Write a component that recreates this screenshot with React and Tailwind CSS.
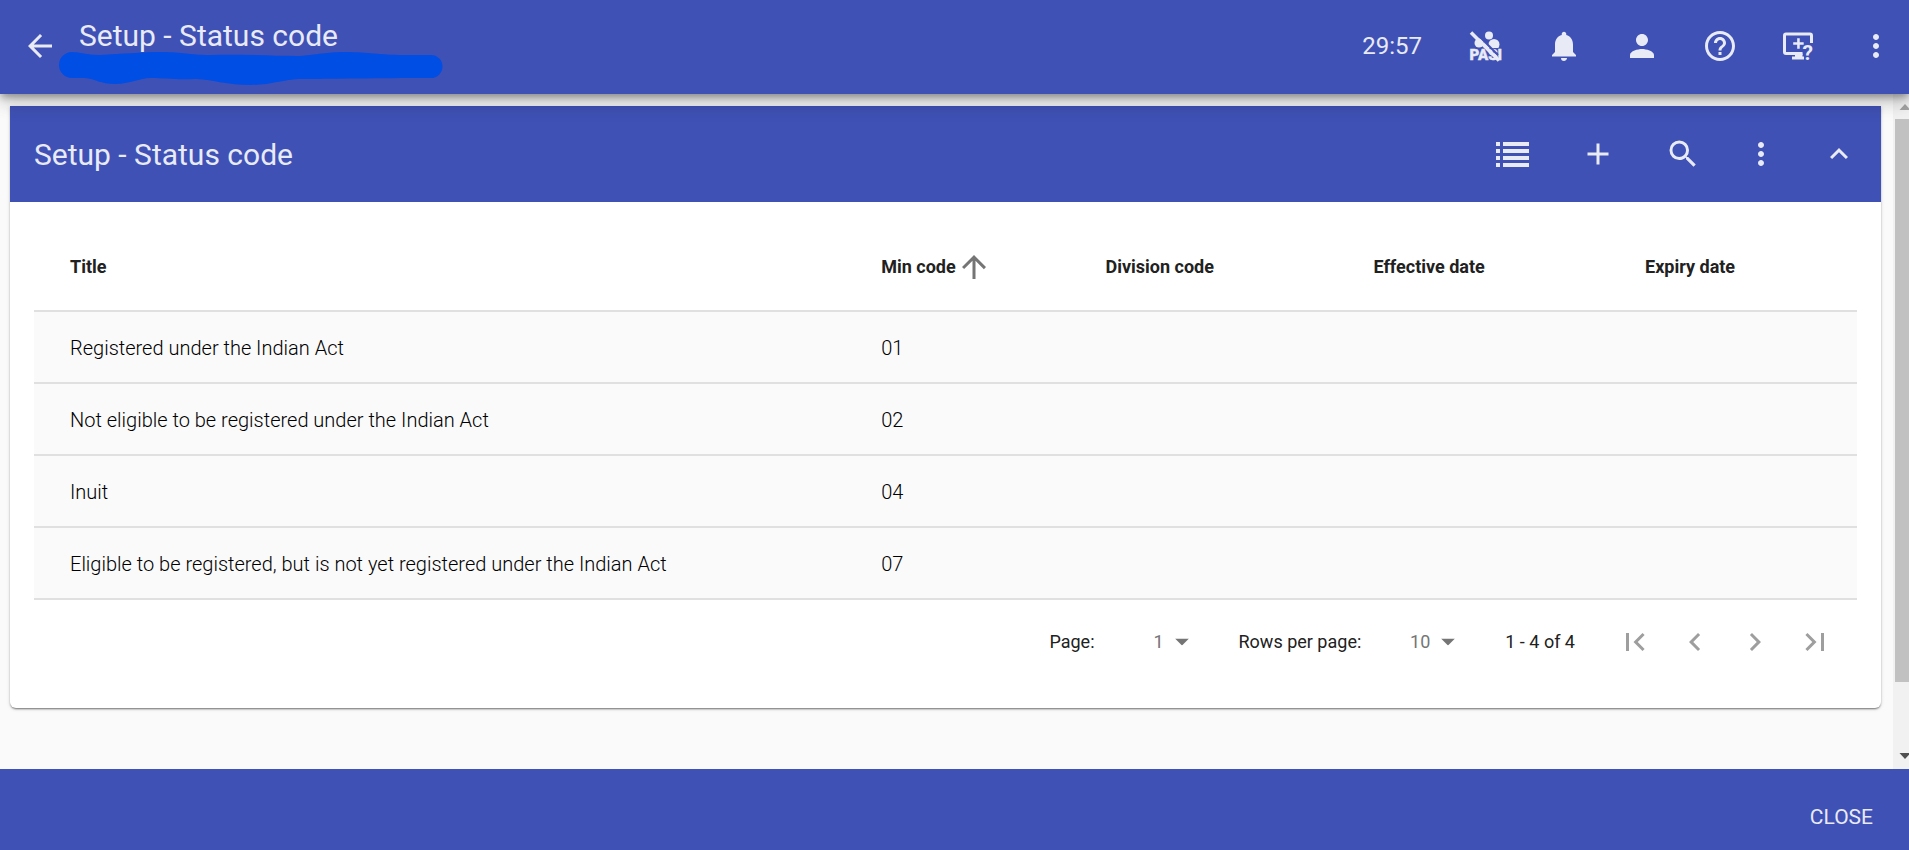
import {
  MdAdd,
  MdArrowBack,
  MdArrowUpward,
  MdChevronLeft,
  MdChevronRight,
  MdExpandLess,
  MdFirstPage,
  MdHelpOutline,
  MdLastPage,
  MdMoreVert,
  MdNotifications,
  MdPerson,
  MdSearch,
} from 'react-icons/md';

const rows = [
  { title: 'Registered under the Indian Act', code: '01' },
  { title: 'Not eligible to be registered under the Indian Act', code: '02' },
  { title: 'Inuit', code: '04' },
  { title: 'Eligible to be registered, but is not yet registered under the Indian Act', code: '07' },
];

function IconButton({ label, width = 'w-[60px]', children }) {
  return (
    <button type="button" aria-label={label} className={`flex h-[60px] shrink-0 items-center justify-center ${width}`}>
      {children}
    </button>
  );
}

function PasiOffIcon() {
  return (
    <svg width="36" height="36" viewBox="0 0 36 36" fill="currentColor" aria-hidden="true">
      <circle cx="21" cy="7.500" r="4" />
      <circle cx="11" cy="15" r="4.500" />
      <circle cx="26" cy="16.500" r="5.500" />
      <path d="M15 12l8 9h-5z" />
      <path d="M0 20h36v3H0z" fill="#3f51b5" />
      <text x="1.500" y="32" fontFamily="Roboto, sans-serif" fontSize="15" fontWeight="900" stroke="currentColor" strokeWidth="0.400">
        PASI
      </text>
      <path d="M5.500 2.500 30 27" stroke="#3f51b5" strokeWidth="2" />
      <path d="M3 4.500 31 32.500" stroke="currentColor" strokeWidth="3.500" />
    </svg>
  );
}

function RemoteHelpIcon() {
  return (
    <svg width="36" height="36" viewBox="0 0 24 24" fill="none" stroke="currentColor" strokeWidth="2" aria-hidden="true">
      <path d="M21 10V5a1 1 0 0 0-1-1H4a1 1 0 0 0-1 1v11a1 1 0 0 0 1 1h11" />
      <path d="M12.300 6.800v7M8.800 10.300h7" strokeWidth="1.700" />
      <path d="M10 17h5v2h1v2H8v-2h2z" fill="currentColor" stroke="none" />
      <text x="15" y="21.300" fill="currentColor" stroke="none" fontFamily="Roboto, sans-serif" fontSize="14" fontWeight="700">
        ?
      </text>
    </svg>
  );
}

function ListIcon() {
  return (
    <svg width="36" height="36" viewBox="0 0 36 36" fill="currentColor" aria-hidden="true">
      <path d="M1 6h4v4H1zM8 6h26v4H8zM1 13h4v4H1zM8 13h26v4H8zM1 20h4v4H1zM8 20h26v4H8zM1 27h4v4H1zM8 27h26v4H8z" />
    </svg>
  );
}

function PagerSelect({ id, label, options }) {
  return (
    <div className="flex items-center">
      <label htmlFor={id}>{label}</label>
      <div className="relative w-[94px]">
        <select id={id} className="w-full appearance-none bg-transparent pr-[25px] text-right text-[#757575] [text-align-last:right]">
          {options.map((o) => (
            <option key={o}>{o}</option>
          ))}
        </select>
        <svg className="pointer-events-none absolute top-1/2 right-0 -translate-y-1/2" width="14" height="7" viewBox="0 0 14 7" aria-hidden="true">
          <path d="M0 0h14L7 7z" fill="#757575" />
        </svg>
      </div>
    </div>
  );
}

const head = 'pt-0.5 pl-9 text-left align-middle font-bold';

export default function App() {
  return (
    <div className="flex h-screen flex-col overflow-hidden bg-[#fafafa] font-[Roboto,sans-serif] text-[#212121]">
      <header className="relative z-10 flex h-[94px] shrink-0 items-center bg-[#3f51b5] pr-[3px] pb-0.5 pl-[10px] text-[#e8eaf6] shadow-[0_4px_7px_-1px_rgba(0,0,0,0.3),0_9px_15px_rgba(0,0,0,0.14),0_2px_27px_rgba(0,0,0,0.12)]">
        <IconButton label="Back">
          <MdArrowBack size={36} />
        </IconButton>
        <div className="relative ml-[9px] h-full flex-1 pt-[18px]">
          <h1 className="text-[30px] leading-9">Setup - Status code</h1>
          <svg className="absolute top-[51px] -left-5" width="384" height="35" viewBox="0 0 384 35" aria-hidden="true">
            <path
              d="M13 1C22 1 27 4 40 4C65 3 80 1 103 1C125 1 130 4 150 4C185 3 215 5 240 5C262 3 270 1 287 1C310 1 320 4 345 4H372A11.500 11.500 0 0 1 372 27C320 27 270 28 240 28C222 29 212 34 191 34C168 34 155 29 137 28C115 29 105 27 92 27C80 27 72 33 56 33C41 33 37 28 25 27C18 27 15 27 13 27A13 13 0 0 1 13 1Z"
              fill="#004ee4"
            />
          </svg>
        </div>
        <span className="mr-[34px] text-2xl">29:57</span>
        <nav className="flex items-center gap-[18px]">
          <IconButton label="PASI disconnected"><PasiOffIcon /></IconButton>
          <IconButton label="Notifications"><MdNotifications size={36} /></IconButton>
          <IconButton label="Account"><MdPerson size={36} /></IconButton>
          <IconButton label="Help"><MdHelpOutline size={36} /></IconButton>
          <IconButton label="Remote support"><RemoteHelpIcon /></IconButton>
          <IconButton label="More options"><MdMoreVert size={36} /></IconButton>
        </nav>
      </header>

      <div className="flex min-h-0 flex-1">
        <main className="min-w-0 flex-1 pt-3 pr-3 pl-[10px]">
          <section className="rounded-b-md bg-white pb-9 shadow-[0_2px_2px_-1px_rgba(0,0,0,0.35),0_1px_2px_rgba(0,0,0,0.2),0_1px_4px_rgba(0,0,0,0.12)]">
            <div className="flex h-24 items-center bg-[#3f51b5] pr-3 pl-6 text-[#e8eaf6]">
              <h2 className="flex-1 pt-0.5 text-[30px] leading-9">Setup - Status code</h2>
              <IconButton label="View list" width="w-[85px]"><ListIcon /></IconButton>
              <IconButton label="Add" width="w-[85px]"><MdAdd size={36} /></IconButton>
              <IconButton label="Search" width="w-[85px]"><MdSearch size={36} /></IconButton>
              <IconButton label="More actions" width="w-[84px] pr-3"><MdMoreVert size={36} /></IconButton>
              <IconButton label="Collapse"><MdExpandLess size={36} /></IconButton>
            </div>
            <div className="px-6 pt-5">
              <table className="w-full table-fixed">
                <colgroup>
                  <col className="w-[44.5%]" />
                  <col className="w-[12.3%]" />
                  <col className="w-[14.7%]" />
                  <col className="w-[14.9%]" />
                  <col className="w-[13.6%]" />
                </colgroup>
                <thead>
                  <tr className="h-[89px] border-b-2 border-[#e0e0e0] text-lg whitespace-nowrap">
                    <th className={head}>Title</th>
                    <th className={head} aria-sort="ascending">
                      <button type="button" className="flex items-center">
                        Min code
                        <MdArrowUpward size={36} className="text-[#757575]" />
                      </button>
                    </th>
                    <th className={head}>Division code</th>
                    <th className={head}>Effective date</th>
                    <th className={head}>Expiry date</th>
                  </tr>
                </thead>
                <tbody>
                  {rows.map((r) => (
                    <tr key={r.code} className="h-[72px] border-b-2 border-[#e0e0e0] bg-[#fafafa] text-xl font-light text-black">
                      <td className="pt-0.5 pl-9">{r.title}</td>
                      <td className="pt-0.5 pl-9">{r.code}</td>
                      <td />
                      <td />
                      <td />
                    </tr>
                  ))}
                </tbody>
              </table>
              <div className="flex h-[72px] items-center justify-end pt-3 pr-3 text-lg">
                <div className="flex items-center gap-[50px]">
                  <PagerSelect id="page" label="Page:" options={['1']} />
                  <PagerSelect id="rows-per-page" label="Rows per page:" options={['10', '25', '50']} />
                  <span>1 - 4 of 4</span>
                </div>
                <div className="ml-[30px] flex text-[#9e9e9e]">
                  <IconButton label="First page"><MdFirstPage size={36} /></IconButton>
                  <IconButton label="Previous page"><MdChevronLeft size={36} /></IconButton>
                  <IconButton label="Next page"><MdChevronRight size={36} /></IconButton>
                  <IconButton label="Last page"><MdLastPage size={36} /></IconButton>
                </div>
              </div>
            </div>
          </section>
        </main>

        <div className="flex w-4 shrink-0 flex-col overflow-hidden bg-[#f1f1f1]" aria-hidden="true">
          <svg className="h-[25px] w-[25px] shrink-0" viewBox="0 0 25 25">
            <path d="M6.500 16 12 10l5.500 6z" fill="#a3a3a3" />
          </svg>
          <div className="flex-1 pl-0.5">
            <div className="h-[90%] w-full bg-[#c1c1c1]" />
          </div>
          <svg className="h-[25px] w-[25px] shrink-0" viewBox="0 0 25 25">
            <path d="M6.500 9 12 15l5.500-6z" fill="#505050" />
          </svg>
        </div>
      </div>

      <footer className="flex shrink-0 justify-end bg-[#3f51b5] pt-[30px] pr-6 pb-[15px] text-[#e8eaf6]">
        <button type="button" className="h-9 px-3 text-[21px] leading-9">CLOSE</button>
      </footer>
    </div>
  );
}
